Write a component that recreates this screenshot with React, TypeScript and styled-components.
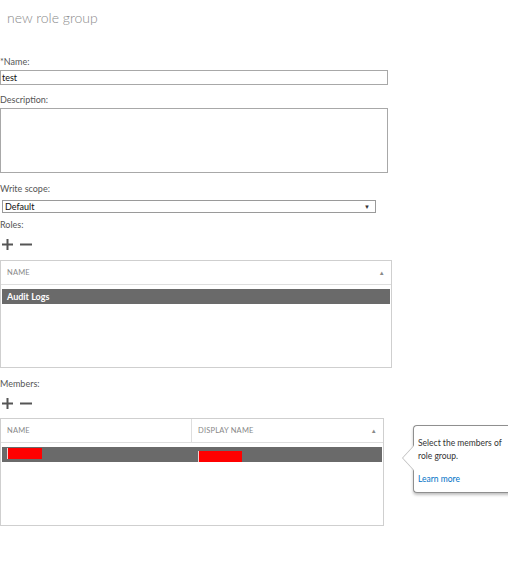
import React from 'react';
import styled, { createGlobalStyle } from 'styled-components';

const GlobalStyle = createGlobalStyle`
  html, body {
    margin: 0;
    padding: 0;
    background: #ffffff;
    overflow: hidden;
  }
  body {
    font-family: Lato, "Open Sans", sans-serif;
    color: #444;
  }
`;

const Page = styled.div`
  width: 508px;
  height: 574px;
  display: flex;
  flex-direction: column;
  box-sizing: border-box;
  padding-top: 8px;
`;

const Title = styled.h1`
  margin: 0 0 0 7px;
  font-size: 14px;
  font-weight: 300;
  color: #8a8a8a;
  line-height: 20px;
  height: 20px;
`;

const Label = styled.div<{ $top: number }>`
  margin-top: ${({ $top }) => $top}px;
  font-size: 9px;
  line-height: 12px;
  height: 12px;
  color: #555;
`;

const TextInput = styled.div`
  margin-top: 2px;
  width: 388px;
  height: 15px;
  box-sizing: border-box;
  border: 1px solid #a8a8a8;
  font-size: 9px;
  line-height: 13px;
  color: #111;
  padding-left: 1px;
`;

const TextArea = styled.div`
  margin-top: 2px;
  width: 388px;
  height: 65px;
  box-sizing: border-box;
  border: 1px solid #a8a8a8;
`;

const Select = styled.div`
  margin: 5px 0 0 2px;
  width: 374px;
  height: 13px;
  box-sizing: border-box;
  border: 1px solid #9a9a9a;
  display: flex;
  align-items: center;
  justify-content: space-between;
  padding: 0 5px 0 2px;
  font-size: 9px;
  color: #111;
`;

const Arrow = styled.span<{ $color?: string }>`
  font-size: 6px;
  color: ${({ $color }) => $color || '#333'};
`;

const Toolbar = styled.div<{ $top: number }>`
  margin-top: ${({ $top }) => $top}px;
  display: flex;
  gap: 7px;
  padding-left: 2px;
  height: 12px;
  align-items: center;
`;

const Row = styled.div`
  display: flex;
  align-items: flex-start;
`;

const Table = styled.div<{ $width: number; $top: number }>`
  margin-top: ${({ $top }) => $top}px;
  width: ${({ $width }) => $width}px;
  height: 108px;
  box-sizing: border-box;
  border: 1px solid #cfcfcf;
  flex-shrink: 0;
`;

const Header = styled.div`
  display: flex;
  height: 23px;
  border-bottom: 1px solid #dedede;
`;

const HeaderCell = styled.div<{ $width?: number; $divider?: boolean }>`
  ${({ $width }) => ($width ? `width: ${$width}px; flex-shrink: 0;` : 'flex: 1;')}
  box-sizing: border-box;
  display: flex;
  align-items: center;
  justify-content: space-between;
  padding: 0 6px;
  font-size: 7.5px;
  letter-spacing: 0.2px;
  color: #888;
  border-right: ${({ $divider }) => ($divider ? '1px solid #dedede' : 'none')};
`;

const SelectedRow = styled.div<{ $top: number }>`
  margin: ${({ $top }) => $top}px 1px 0 1px;
  height: 15px;
  background: #6a6a6a;
  display: flex;
  align-items: center;
  color: #fff;
  font-size: 9px;
  font-weight: bold;
`;

const Cell = styled.div<{ $width?: number }>`
  ${({ $width }) => ($width ? `width: ${$width}px; flex-shrink: 0;` : 'flex: 1;')}
  height: 100%;
  display: flex;
  align-items: center;
  padding-left: 5px;
  box-sizing: border-box;
`;

const Redaction = styled.div<{ $w: number; $top: number; $h: number }>`
  align-self: flex-start;
  margin-top: ${({ $top }) => $top}px;
  width: ${({ $w }) => $w}px;
  height: ${({ $h }) => $h}px;
  flex-shrink: 0;
  background: #ff0000;
  border-left: 1px solid #f2d0d0;
`;

const Callout = styled.div`
  position: relative;
  margin: 16px 0 0 29px;
  width: 110px;
  height: 68px;
  flex-shrink: 0;
  box-sizing: border-box;
  border: 1px solid #8f8f8f;
  border-right: none;
  border-radius: 4px 0 0 4px;
  box-shadow: 0 2px 3px rgba(0, 0, 0, 0.25);
  background: #fff;
  padding: 11px 0 0 4px;
  font-size: 8.5px;
  line-height: 13px;
  color: #333;
  &::before {
    content: '';
    position: absolute;
    left: -12px;
    top: 19px;
    border: 12px solid transparent;
    border-left: none;
    border-right-color: #bdbdbd;
    border-top-width: 13px;
    border-bottom-width: 13px;
  }
  &::after {
    content: '';
    position: absolute;
    left: -11px;
    top: 20px;
    border: 11px solid transparent;
    border-left: none;
    border-right-color: #fff;
    border-top-width: 12px;
    border-bottom-width: 12px;
  }
`;

const CalloutLink = styled.div`
  margin-top: 10px;
  color: #0072c6;
`;

const PlusIcon = () => (
  <svg width="11" height="11" viewBox="0 0 11 11">
    <path d="M5.5 0v11M0 5.5h11" stroke="#555" strokeWidth="2" />
  </svg>
);

const MinusIcon = () => (
  <svg width="12" height="11" viewBox="0 0 12 11">
    <path d="M0 5.5h12" stroke="#555" strokeWidth="2" />
  </svg>
);

export default function App() {
  return (
    <>
      <GlobalStyle />
      <Page>
        <Title>new role group</Title>
        <Label $top={28}>*Name:</Label>
        <TextInput>test</TextInput>
        <Label $top={9}>Description:</Label>
        <TextArea />
        <Label $top={10}>Write scope:</Label>
        <Select>
          <span>Default</span>
          <Arrow>▼</Arrow>
        </Select>
        <Label $top={6}>Roles:</Label>
        <Toolbar $top={7}>
          <PlusIcon />
          <MinusIcon />
        </Toolbar>
        <Table $width={392} $top={10}>
          <Header>
            <HeaderCell>
              <span>NAME</span>
              <Arrow $color="#888">▲</Arrow>
            </HeaderCell>
          </Header>
          <SelectedRow $top={4}>
            <Cell>Audit Logs</Cell>
          </SelectedRow>
        </Table>
        <Label $top={10}>Members:</Label>
        <Toolbar $top={7}>
          <PlusIcon />
          <MinusIcon />
        </Toolbar>
        <Row>
          <Table $width={384} $top={9}>
            <Header>
              <HeaderCell $width={191} $divider>
                <span>NAME</span>
              </HeaderCell>
              <HeaderCell>
                <span>DISPLAY NAME</span>
                <Arrow $color="#888">▲</Arrow>
              </HeaderCell>
            </Header>
            <SelectedRow $top={4}>
              <Cell $width={191}>
                <Redaction $w={34} $top={1} $h={11} />
              </Cell>
              <Cell>
                <Redaction $w={43} $top={4} $h={11} />
              </Cell>
            </SelectedRow>
          </Table>
          <Callout>
            Select the members of
            <br />
            role group.
            <CalloutLink>Learn more</CalloutLink>
          </Callout>
        </Row>
      </Page>
    </>
  );
}
